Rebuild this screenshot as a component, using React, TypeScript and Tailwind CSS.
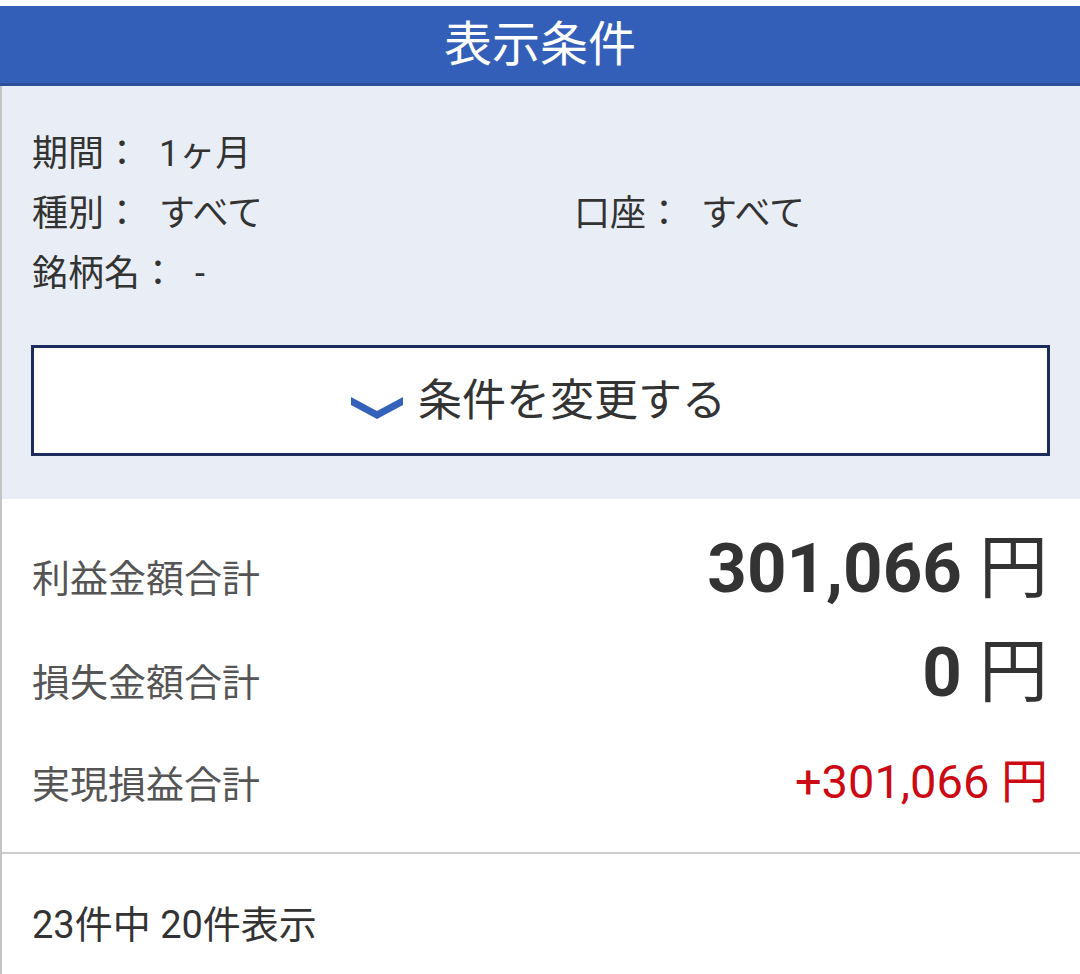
import React from "react";

type Cond = { label: string; value: string };

const font = { fontFamily: "Roboto, 'Noto Sans CJK JP', sans-serif" };

function CondItem({ label, value }: Cond) {
  return (
    <div className="flex">
      <span>{label}：</span>
      <span className="ml-[19px]">{value}</span>
    </div>
  );
}

function Chevron() {
  return (
    <svg width="52" height="22" viewBox="0 0 52 22" className="mt-[14px]">
      <polygon points="0,0 26,14 52,0 52,8 26,22 0,8" fill="#3461b9" />
    </svg>
  );
}

type Row = { label: string; value: string; big?: boolean; cls: string };

const rows: Row[] = [
  { label: "利益金額合計", value: "301,066", big: true, cls: "" },
  { label: "損失金額合計", value: "0", big: true, cls: "mt-[35px]" },
  { label: "実現損益合計", value: "+301,066", cls: "mt-[51px]" },
];

export default function App() {
  return (
    <div className="w-[1080px] h-[974px] bg-white pt-[6px] overflow-hidden" style={font}>
      <div className="h-[80px] bg-[#345fb9] border-b-[3px] border-[#2b4f99] flex items-center justify-center">
        <h1 className="text-[48px] leading-none text-white">表示条件</h1>
      </div>

      <div className="border-l-2 border-[#c4c4c4]">
        <div className="bg-[#e9eef6] pt-[38px] pb-[43px] pl-[29px] pr-[30px]">
          <div className="pl-[1px] text-[36px] leading-[60px] text-[#333]">
            <CondItem label="期間" value="1ヶ月" />
            <div className="flex">
              <div className="w-[542px]">
                <CondItem label="種別" value="すべて" />
              </div>
              <CondItem label="口座" value="すべて" />
            </div>
            <CondItem label="銘柄名" value="-" />
          </div>

          <button className="mt-[41px] w-full h-[111px] bg-white border-[3px] border-[#1b2b5c] flex items-center justify-center gap-[15px] pr-[4px] text-[#333]">
            <Chevron />
            <span className="text-[44px] leading-none">条件を変更する</span>
          </button>
        </div>

        <div className="pt-[35px] pb-[47px] pl-[30px] pr-[32px] border-b-2 border-[#cccccc]">
          {rows.map((r) => (
            <div key={r.label} className={"flex items-baseline justify-between " + r.cls}>
              <span className="text-[38px] leading-none text-[#555]">{r.label}</span>
              {r.big ? (
                <span className="text-[69px] leading-none text-[#333]">
                  <span className="font-bold">{r.value}</span> 円
                </span>
              ) : (
                <span className="text-[47px] leading-none text-[#cc0a14]">{r.value} 円</span>
              )}
            </div>
          ))}
        </div>

        <div className="pt-[52px] px-[30px] h-[200px]">
          <p className="text-[38px] leading-none text-[#333]">23件中 20件表示</p>
        </div>
      </div>
    </div>
  );
}
